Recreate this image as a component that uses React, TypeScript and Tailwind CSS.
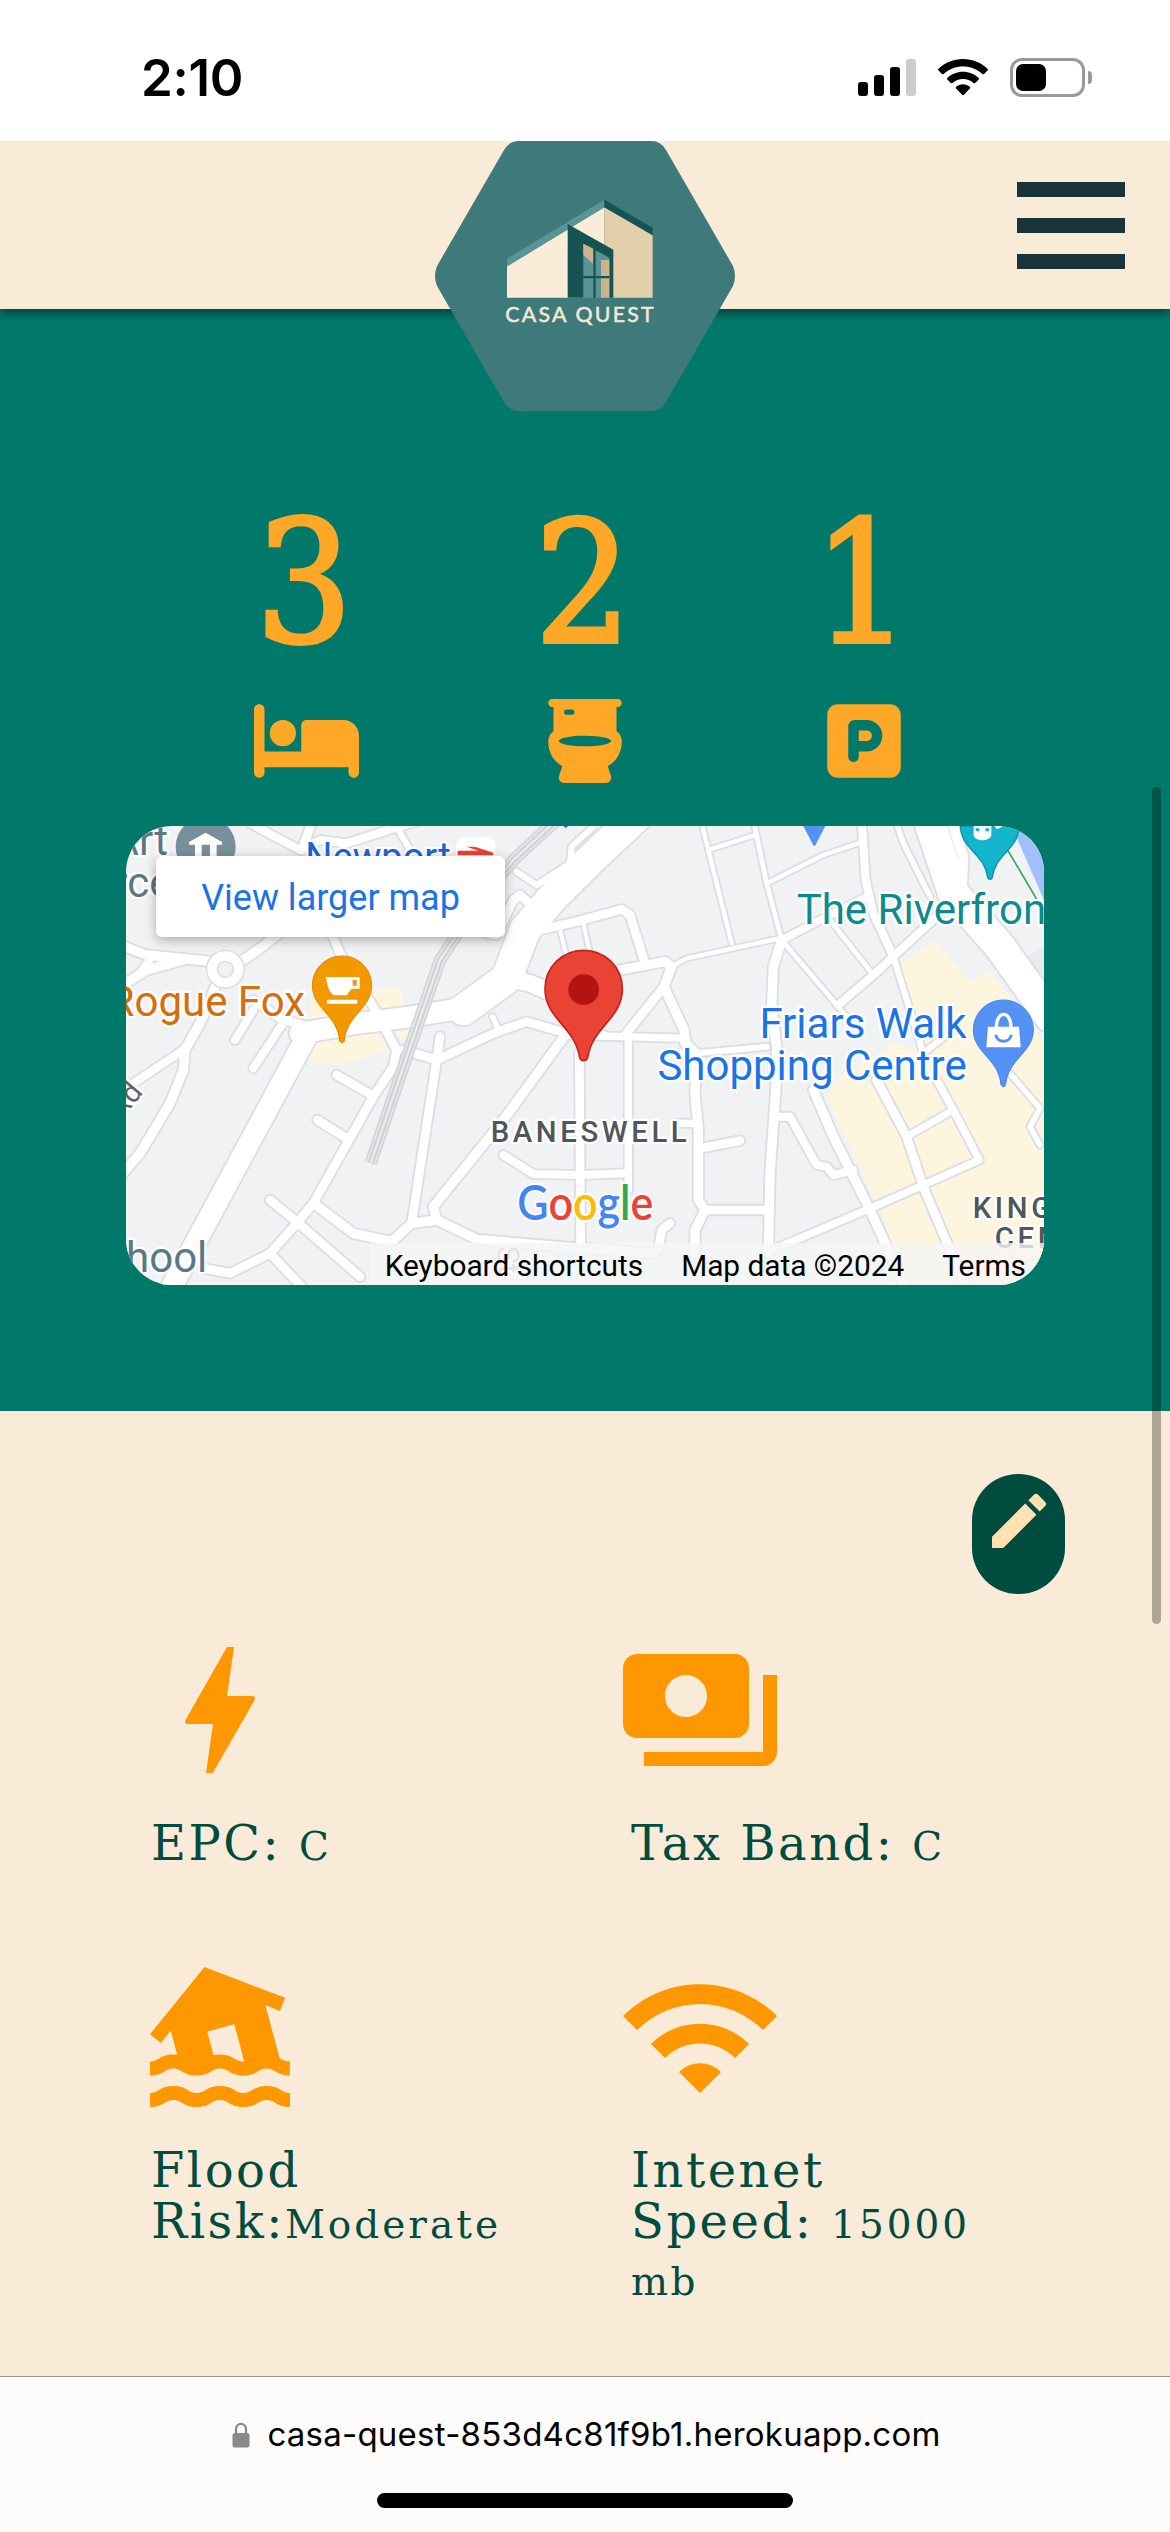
import type { ReactNode } from "react";
import { FaBed, FaToilet, FaSquareParking } from "react-icons/fa6";
import { MdBolt, MdEdit, MdPayments, MdWifi, MdFlood } from "react-icons/md";

type Road = [string, number];

const westRoads: Road[] = [
  ["M150 1410L565 640", 62],
  ["M540 640L700 612L860 592L1040 562", 62],
  ["M1030 570L1160 475L1215 330L1300 230L1400 130L1570 -30", 92],
  ["M1150 470L1230 490L1300 520", 50],
  ["M0 375L80 405L280 425", 28],
  ["M0 500L80 450L190 420", 28],
  ["M90 420L50 470", 22],
  ["M355 430L420 385L490 330L560 230", 28],
  ["M290 490L245 600L195 690L190 750L150 850L60 1000L0 1070", 28],
  ["M190 690L40 790", 24],
  ["M345 660L400 570", 24],
  ["M400 745L495 600", 24],
  ["M400 540L480 595L570 622", 26],
  ["M635 340L660 400L760 560L830 690L820 740L760 830L580 1150L530 1210L450 1300L330 1360L250 1345", 26],
  ["M650 765L755 825", 26],
  ["M592 900L680 955", 26],
  ["M450 1140L530 1205L720 1370", 26],
  ["M580 1150L700 1240L815 1265L875 1210L950 1200L1070 1258L1380 1285L1600 1300", 28],
  ["M960 650L950 720L875 1210", 26],
  ["M850 690L950 720L1120 640L1220 605L1340 640L1450 645", 26],
  ["M1118 590L1135 630", 16],
  ["M1340 640L1150 900L940 1160L950 1200", 28],
  ["M1378 700L1382 1290", 26],
  ["M1150 1005L1240 1062L1380 1065L1520 1060", 24],
  ["M450 1300L545 1400", 26],
  ["M390 10L540 90L600 60L680 70L820 25L940 -10", 24],
  ["M575 10L545 90", 26],
  ["M830 20L870 90", 18],
  ["M1240 260L1200 225L1180 240L1130 345L1100 340", 26],
  ["M1190 155L1250 195L1350 130L1355 80L1420 20", 18],
  ["M1260 330L1380 302L1505 268L1530 285L1575 430", 26],
  ["M1320 330L1340 410M1390 310L1410 400", 12],
];

const eastRoads: Road[] = [
  ["M120 450L255 425L275 440L252 500L312 630L315 670L350 700L345 820L355 930L355 1140L375 1170L345 1230L345 1300", 28],
  ["M252 500L135 645", 26],
  ["M-40 645L130 650L320 655", 22],
  ["M350 700L560 680", 18],
  ["M145 650L145 1110", 22],
  ["M605 360L580 440L575 560L590 680L588 800L570 1060L565 1300", 28],
  ["M605 360L760 280L860 230", 22],
  ["M845 0L857 180L880 280L940 410L880 465L775 555", 24],
  ["M940 410L1080 280", 24],
  ["M940 410L1030 700L1130 620", 18],
  ["M365 10L385 90L455 370", 13],
  ["M385 90L525 45", 13],
  ["M522 10L560 190L605 360L800 590", 14],
  ["M560 190L730 105L850 65", 13],
  ["M275 440L320 415L600 355", 13],
  ["M750 300L880 465", 14],
  ["M950 10L970 70L1050 230", 16],
  ["M1040 -20L1120 220L1260 380L1410 590", 92],
  ["M1120 20L1150 110L1145 220", 30],
  ["M600 890L630 890L710 1035L740 1040L760 1065L820 1050", 24],
  ["M700 810L760 950L870 1170L980 1410", 28],
  ["M565 1295L870 1165L1030 1095L1198 1020L1120 870L1070 780", 22],
  ["M890 780L980 950L1030 1100L1160 1410", 26],
  ["M980 950L1120 870", 20],
  ["M375 1170L570 1170", 26],
  ["M360 985L480 962", 26],
  ["M290 910L355 910", 22],
  ["M270 1210L245 1230L235 1290", 26],
  ["M1290 760L1380 865L1350 920L1380 975", 16],
];

function RoadLayer({ casing }: { casing: boolean }) {
  const draw = ([d, w]: Road) => (
    <path key={d} d={d} stroke={casing ? "#dcdee3" : "#ffffff"} strokeWidth={casing ? w + 11 : w} />
  );
  return (
    <g fill="none" strokeLinecap="round" strokeLinejoin="round">
      {westRoads.map(draw)}
      <g transform="translate(1380 0)">{eastRoads.map(draw)}</g>
    </g>
  );
}

const RAIL = "M752 1030L850 740L960 420L1080 240L1180 120L1310 0";

function MapCanvas() {
  return (
    <svg viewBox="18 18 2754 1377" className="block h-full w-full" fontFamily="Roboto, sans-serif">
      <rect x="18" y="18" width="2754" height="1377" fill="#f1f2f4" />
      <g fill="#fdf5dd">
        <path d="M572 540L840 500L856 560L772 582L572 610ZM585 660L770 640L808 688L762 705L680 728L582 735L560 715ZM820 635L875 620L862 675Z" />
        <path transform="translate(1380 0)" d="M965 430L1065 360L1170 485L1220 455L1300 540L1400 680V1400H975L905 1180L870 1110L740 830L780 770L950 670L1010 690Z" />
      </g>
      <path d="M2680 30H2772V240Z" fill="#9fc0fa" />
      <path d="M2718 410L2772 380V500Z" fill="#e8eaed" />
      <RoadLayer casing />
      <RoadLayer casing={false} />
      <circle cx="316" cy="448" r="40" fill="#f1f2f4" stroke="#dcdee3" strokeWidth="38" />
      <circle cx="316" cy="448" r="40" fill="none" stroke="#fff" strokeWidth="28" />
      <path d="M2664 92L2772 275" stroke="#34a853" strokeWidth="5" />
      <g fill="none" strokeLinejoin="round">
        <path d={RAIL} stroke="#cfd3d7" strokeWidth="38" opacity="0.9" />
        <path d={RAIL} stroke="#eceef0" strokeWidth="26" />
        <path d={RAIL} stroke="#cfd3d7" strokeWidth="20" />
        <path d={RAIL} stroke="#eceef0" strokeWidth="6" />
      </g>

      {/* Place labels with their white halo */}
      <g fontSize="126" stroke="#fff" strokeWidth="14" strokeLinejoin="round" paintOrder="stroke">
        <g fill="#5b7886">
          <text x="144" y="104" textAnchor="end">Art</text>
          <text x="-20" y="230">rce</text>
          <text x="262" y="1357" textAnchor="end">School</text>
        </g>
        <text x="555" y="587" textAnchor="end" fill="#d56e0c">Rogue Fox</text>
        <text x="556" y="152" fontSize="120" textLength="436" lengthAdjust="spacingAndGlyphs" fill="#1a66d2">Newport</text>
        <text x="2030" y="312" fill="#0d8a8d">The Riverfront</text>
        <g fill="#1a73e8" textAnchor="end">
          <text x="2540" y="655">Friars Walk</text>
          <text x="2540" y="780">Shopping Centre</text>
        </g>
        <text transform="translate(72 818) rotate(-50)" fontSize="88" textAnchor="end" fill="#5f6368">Rd</text>
        <g fontSize="88" fill="#50565b" fontWeight="500">
          <text x="1112" y="966" textLength="588">BANESWELL</text>
          <text x="2558" y="1195" letterSpacing="11">KINGS</text>
          <text x="2624" y="1284" letterSpacing="11">CENTRE</text>
        </g>
        <text transform="translate(1130 1280) rotate(86)" fontSize="92" fill="#9aa0a6">St</text>
      </g>

      {/* Museum and station markers */}
      <circle cx="257" cy="80" r="90" fill="#78909c" />
      <path d="M207 66L257 38L306 66V74H290V110H270V74H245V110H225V74H207Z" fill="#fff" />
      <rect x="1008" y="52" width="118" height="90" rx="24" fill="#fff" />
      <path d="M1013 92H1075L1040 80H1065L1120 98V106H1013Z" fill="#ea4335" />

      {/* Cafe */}
      <path d="M666 408c50 0 89 40 89 89c0 68-76 88-82 166c-2 6-12 6-14 0c-6-78-82-98-82-166c0-49 39-89 89-89Z" fill="#f29900" stroke="#e08600" strokeWidth="3" />
      <path d="M618 471H719V506H695L680 526H642C626 516 621 494 618 471ZM698 480V497H710V480ZM621 539H712V551H621Z" fill="#fff" fillRule="evenodd" />

      {/* Property pin */}
      <path d="M1391 391c66 0 116 52 116 116c0 90-90 112-104 206c-3 12-21 12-24 0c-14-94-104-116-104-206c0-64 50-116 116-116Z" fill="#ea4335" stroke="#c5221f" strokeWidth="5" />
      <circle cx="1391" cy="509" r="46" fill="#b31412" />

      {/* Shopping centre */}
      <path d="M2650 540c50 0 90 40 90 90c0 68-76 86-83 164c-2 8-12 8-14 0c-7-78-83-96-83-164c0-50 40-90 90-90Z" fill="#5491f5" stroke="#4285f4" strokeWidth="3" />
      <path d="M2604 620H2697L2702 682H2599Z" fill="#fff" />
      <path d="M2629 622C2629 570 2673 570 2673 622" fill="none" stroke="#fff" strokeWidth="10" />
      <path d="M2627 644C2632 670 2669 670 2674 644" fill="none" stroke="#5491f5" strokeWidth="9" />

      {/* Riverfront theatre and the pin cut off above it */}
      <path d="M2521 18C2524 90 2594 100 2603 172c2 8 12 8 14 0C2626 100 2696 90 2697 18Z" fill="#12b5cb" stroke="#0e93a6" strokeWidth="4" />
      <path d="M2561 18H2614V46C2610 66 2565 66 2561 46ZM2622 18H2650L2632 28Z" fill="#fff" />
      <path d="M2567 25H2578V34H2567ZM2596 25H2607V34H2596Z" fill="#12b5cb" />
      <path d="M2050 18H2116L2088 72C2086 80 2080 80 2078 72Z" fill="#5491f5" />
      <path d="M1330 18H1345L1337 24Z" fill="#1a73e8" />

      <text x="1192" y="1199" fontSize="142" fontFamily="Lato, sans-serif" fontWeight="600" textLength="408" lengthAdjust="spacingAndGlyphs" stroke="#fff" strokeWidth="12" paintOrder="stroke">
        <tspan fill="#4285f4">G</tspan>
        <tspan fill="#ea4335">o</tspan>
        <tspan fill="#fbbc04">o</tspan>
        <tspan fill="#4285f4">g</tspan>
        <tspan fill="#34a853">l</tspan>
        <tspan fill="#ea4335">e</tspan>
      </text>
    </svg>
  );
}

function Logo() {
  return (
    <svg viewBox="0 0 300 270" className="h-[270px] w-[300px]">
      <path d="M84 0H216Q226 0 231 9L298 125Q302 135 298 145L231 261Q226 270 216 270H84Q74 270 69 261L2 145Q-2 135 2 125L69 9Q74 0 84 0Z" fill="#3f7a7a" />
      <g transform="translate(-15 -11) scale(0.33333)">
        <path d="M261 409L553 232V503H261Z" fill="#fbebd9" />
        <path d="M553 232L698 316V503H553Z" fill="#e3cfa9" />
        <path d="M261 386L553 209V232L261 409Z" fill="#5a9494" />
        <path d="M553 209L698 293V316L553 232Z" fill="#165454" />
        <path d="M443 282L580 359V503H443Z" fill="#165454" />
        <path d="M490 341L568 383V503H490Z" fill="#5a9494" />
        <path d="M490 341L520 356V402L490 375ZM543 390H568V503H543Z" fill="#c9b48f" />
        <path d="M520 356H527V503H520ZM490 438H568V445H490Z" fill="#165454" />
        <text x="256" y="576" fontSize="64" fontFamily="Lato, sans-serif" textLength="445" fill="#f5e8d5" stroke="#f5e8d5" strokeWidth="1.6">CASA QUEST</text>
      </g>
    </svg>
  );
}

function StatusBar() {
  return (
    <div className="relative z-20 flex h-[141px] shrink-0 items-start justify-between bg-white pt-[58px] pr-[78px] pl-[141px]">
      <span className="font-['Inter'] text-[51px] leading-[40px] font-semibold tracking-[-0.3px] text-black">2:10</span>
      <div className="flex items-start gap-[22px]">
        <div className="flex h-[38px] items-end gap-[6px]">
          <i className="h-[14px] w-[10px] rounded-[3px] bg-black" />
          <i className="h-[21px] w-[10px] rounded-[3px] bg-black" />
          <i className="h-[29px] w-[10px] rounded-[3px] bg-black" />
          <i className="h-[37px] w-[10px] rounded-[3px] bg-[#cccccc]" />
        </div>
        <svg viewBox="0 0 50 37" className="mt-px h-[37px] w-[50px]">
          <path d="M25 0C34.600 0 43.500 3.800 49.500 9.800Q50.300 10.700 49.500 11.500L46 15Q45.200 15.700 44.300 15C39 10 32.500 7.500 25 7.500S11 10 5.700 15Q4.800 15.700 4 15L.5 11.500Q-.3 10.700 .5 9.800C6.500 3.800 15.400 0 25 0Z" />
          <path d="M25 12.700C31 12.700 36.500 15 40.700 18.900Q41.500 19.700 40.700 20.500L37.200 24Q36.400 24.700 35.500 24C32.600 21.500 29 20 25 20S17.400 21.500 14.500 24Q13.600 24.700 12.800 24L9.300 20.500Q8.500 19.700 9.300 18.900C13.500 15 19 12.700 25 12.700Z" />
          <path d="M25 25.200C27.700 25.200 30 26.100 31.900 27.700Q32.700 28.500 31.900 29.400L25.900 35.700Q25 36.600 24.100 35.700L18.100 29.400Q17.300 28.500 18.100 27.700C20 26.100 22.300 25.200 25 25.200Z" />
        </svg>
        <div className="flex items-center gap-[3px]">
          <div className="flex h-[39px] w-[75px] items-center rounded-[12px] border-3 border-[#999999] pl-[3px]">
            <div className="h-[27px] w-[30px] rounded-[7px] bg-black" />
          </div>
          <div className="h-[13px] w-[4px] rounded-r-full bg-[#999999]" />
        </div>
      </div>
    </div>
  );
}

function Header() {
  return (
    <header className="relative z-10 flex h-[168px] shrink-0 items-start bg-[#faebd9] pr-[45px] pl-[435px] shadow-[0_3px_10px_rgba(0,0,0,0.55)]">
      <div className="h-0 w-[300px]">
        <Logo />
      </div>
      <button className="mt-[41px] ml-auto flex w-[108px] flex-col gap-[21px]">
        <span className="h-[15px] bg-[#19353b]" />
        <span className="h-[15px] bg-[#19353b]" />
        <span className="h-[15px] bg-[#19353b]" />
      </button>
    </header>
  );
}

function Stat({ value, children }: { value: string; children: ReactNode }) {
  return (
    <div className="flex w-[279px] flex-col items-center">
      <span className="mt-[4px] mr-[4px] h-[127px] font-['DejaVu_Serif_Condensed','DejaVu_Serif'] text-[168px] leading-[127px] font-normal [-webkit-text-stroke:4px_#ffa726] [font-stretch:condensed]">
        {value}
      </span>
      <span className="mt-[51px] flex h-[84px] items-center text-[84px]">{children}</span>
    </div>
  );
}

function MapCard() {
  return (
    <div className="relative mx-auto mt-[43px] h-[459px] w-[918px] overflow-hidden rounded-[46px]">
      <MapCanvas />
      <a className="absolute top-[30px] left-[30px] flex h-[81px] w-[349px] items-center justify-center rounded-[6px] bg-white pt-[2px] font-['Roboto'] text-[36px] whitespace-nowrap text-[#1a73e8] shadow-[0_3px_12px_rgba(0,0,0,0.3)]">
        View larger map
      </a>
      <div className="absolute right-0 bottom-0 flex h-[42px] w-[674px] items-center justify-end gap-[38px] bg-[#f5f5f5]/80 pt-[4px] pr-[18px] font-['Roboto'] text-[29.8px] whitespace-nowrap text-black">
        <span>Keyboard shortcuts</span>
        <span>Map data ©2024</span>
        <span>Terms</span>
      </div>
    </div>
  );
}

function Detail({ icon, children }: { icon: ReactNode; children: ReactNode }) {
  return (
    <div className="w-[480px]">
      <div className="text-[168px] text-[#ff9800]">{icon}</div>
      <div className="mt-6 ml-[15px] font-['DejaVu_Serif'] text-[48px] leading-[51px] tracking-[2.5px] whitespace-nowrap text-[#004d40]">
        {children}
      </div>
    </div>
  );
}

function Value({ children }: { children: ReactNode }) {
  return <span className="text-[39px] leading-none tracking-[3px]">{children}</span>;
}

export default function App() {
  return (
    <div className="relative flex h-[2532px] w-[1170px] flex-col overflow-hidden bg-[#faebd9]">
      <StatusBar />
      <Header />

      <section className="h-[1102px] shrink-0 bg-[#00796b] pt-[208px] text-[#ffa726]">
        <div className="flex justify-center">
          <Stat value="3"><FaBed className="h-[84px] w-[105px]" /></Stat>
          <Stat value="2"><FaToilet className="h-[84px] w-[74px]" /></Stat>
          <Stat value="1"><FaSquareParking className="h-[84px] w-[74px]" /></Stat>
        </div>
        <MapCard />
      </section>

      <section className="h-[965px] shrink-0 pt-[63px]">
        <button className="mr-[105px] ml-auto flex h-[120px] w-[93px] justify-center rounded-[46px] bg-[#004d40] pt-[11px] text-[72px] text-[#ffe0b2]">
          <MdEdit />
        </button>
        <div className="mt-8 grid grid-cols-[480px_480px] gap-y-[84px] pl-[136px]">
          <Detail icon={<MdBolt />}>
            EPC: <Value>C</Value>
          </Detail>
          <Detail icon={<MdPayments />}>
            Tax Band: <Value>C</Value>
          </Detail>
          <Detail icon={<MdFlood />}>
            Flood
            <br />
            Risk:<Value>Moderate</Value>
          </Detail>
          <Detail icon={<MdWifi />}>
            Intenet
            <br />
            Speed: <Value>15000</Value>
            <div className="text-[39px] leading-[69px]">mb</div>
          </Detail>
        </div>
      </section>

      <footer className="flex h-[156px] shrink-0 flex-col items-center border-t border-[#999999] bg-[#fdfcfa]">
        <div className="mt-[36px] flex h-[42px] items-center gap-[17px] pl-[3px]">
          <svg viewBox="0 0 18 26" className="mt-[1px] h-[26px] w-[18px]">
            <path d="M4 12V7.500C4 0 14 0 14 7.500V12" fill="none" stroke="#8a8a8d" strokeWidth="2.300" />
            <rect x="0.500" y="11" width="17" height="14.500" rx="2.500" fill="#8a8a8d" />
          </svg>
          <span className="font-['Inter'] text-[33px] leading-[42px] tracking-[0.24px] whitespace-nowrap text-black">
            casa-quest-853d4c81f9b1.herokuapp.com
          </span>
        </div>
        <div className="mt-[38px] h-[15px] w-[416px] rounded-full bg-black" />
      </footer>

      {/* Scroll indicator */}
      <div className="absolute top-[787px] right-[9px] z-20 h-[837px] w-[9px] rounded-full bg-black/30" />
    </div>
  );
}
